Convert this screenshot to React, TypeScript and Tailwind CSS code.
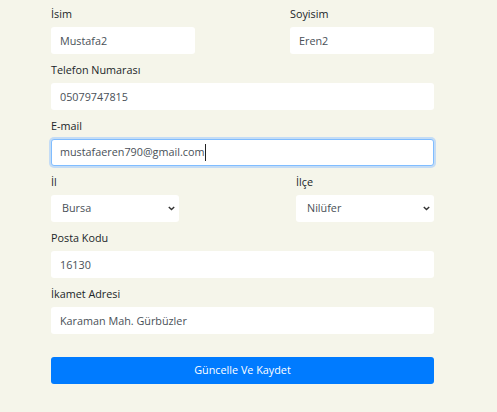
import React from "react";

function Field({
  label,
  value,
  className = "",
}: {
  label: string;
  value: string;
  className?: string;
}) {
  return (
    <div className={`flex flex-col gap-[5px] ${className}`}>
      <label className="leading-[17px] text-[#212529]">{label}</label>
      <input
        defaultValue={value}
        className="h-[27px] w-full rounded-[3px] bg-white px-[9px] text-[#495057] outline-none"
      />
    </div>
  );
}

function SelectField({
  label,
  value,
  className = "",
}: {
  label: string;
  value: string;
  className?: string;
}) {
  return (
    <div className={`flex flex-col gap-[5px] ${className}`}>
      <label className="leading-[17px] text-[#212529]">{label}</label>
      <div className="relative">
        <select
          defaultValue={value}
          className="h-[27px] w-full appearance-none rounded-[3px] bg-white pl-[11px] pr-[16px] text-[#495057] outline-none"
        >
          <option>{value}</option>
        </select>
        {/* native-looking small chevron */}
        <svg
          className="pointer-events-none absolute right-[4px] top-[11px]"
          width="7"
          height="5"
          viewBox="0 0 7 5"
          fill="none"
        >
          <path d="M0.8 0.9 L3.5 3.6 L6.2 0.9" stroke="#333" strokeWidth="1.4" />
        </svg>
      </div>
    </div>
  );
}

export default function App() {
  return (
    <div className="min-h-screen bg-[#f5f5ea] font-['Open_Sans',sans-serif] text-[10.8px]">
      <form className="ml-[51px] flex w-[383px] flex-col gap-[7px] pt-[5px]">
        <div className="flex justify-between">
          <Field label="İsim" value="Mustafa2" className="w-[144px]" />
          <Field label="Soyisim" value="Eren2" className="w-[144px]" />
        </div>

        <Field label="Telefon Numarası" value="05079747815" />

        <div className="flex flex-col gap-[5px]">
          <label className="leading-[17px] text-[#212529]">E-mail</label>
          <div className="flex h-[27px] items-center rounded-[3px] border border-[#80bdff] bg-white px-[8px] text-[#495057] ring-2 ring-[#c4dcf5]">
            <span>mustafaeren790@gmail.com</span>
            <span className="ml-px h-[17px] w-px bg-[#222]" />
          </div>
        </div>

        <div className="flex justify-between">
          <SelectField label="İl" value="Bursa" className="w-[128px]" />
          <SelectField label="İlçe" value="Nilüfer" className="w-[138px]" />
        </div>

        <Field label="Posta Kodu" value="16130" />
        <Field label="İkamet Adresi" value="Karaman Mah. Gürbüzler" />

        <button
          type="button"
          className="mt-[16px] h-[27px] w-full rounded-[3px] bg-[#007bff] text-white"
        >
          Güncelle Ve Kaydet
        </button>
      </form>
    </div>
  );
}
